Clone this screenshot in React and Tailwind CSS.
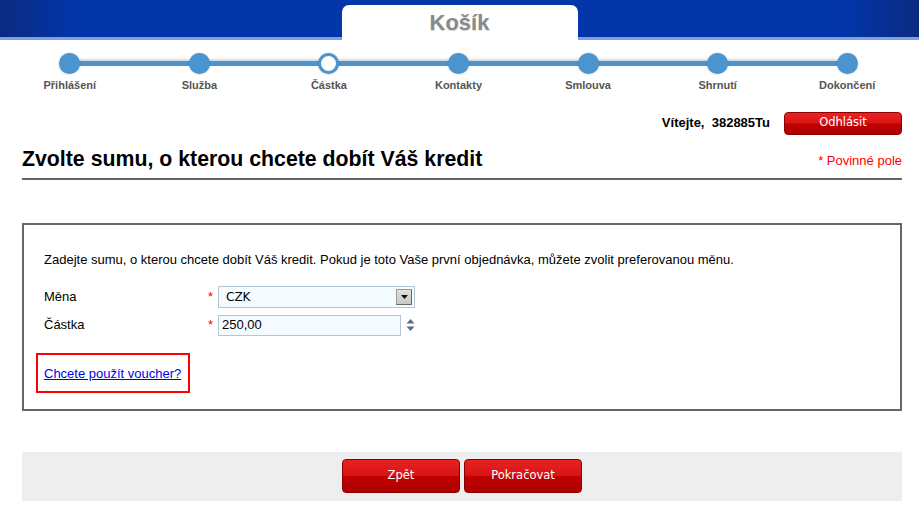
const steps = ['Přihlášení', 'Služba', 'Částka', 'Kontakty', 'Smlouva', 'Shrnutí', 'Dokončení'];

function RedButton({ children, className = '' }) {
  return (
    <button
      className={`rounded-[4px] border border-[#8e0000] bg-[linear-gradient(#e82222_0%,#d81414_48%,#bf0000_52%,#b00000_100%)] text-white text-[11.5px] font-['DejaVu_Sans',sans-serif] ${className}`}
    >
      {children}
    </button>
  );
}

export default function App() {
  return (
    <div className="w-[919px] h-[517px] bg-white overflow-hidden font-['Liberation_Sans',Arial,sans-serif] text-black">
      {/* top banner with tab */}
      <div className="h-[40px] flex items-end justify-center bg-[linear-gradient(90deg,#0a2a80_0%,#0336a8_8%,#0336a8_92%,#0a2a80_100%)] border-b-[3px] border-[#7f9fe0]">
        <div className="w-[236px] h-[35px] -mb-[3px] bg-white rounded-t-[7px] flex items-center justify-center">
          <span className="text-[22px] font-bold text-[#8a8a8a] [text-shadow:0_1px_1px_rgba(0,0,0,0.15)]">Košík</span>
        </div>
      </div>

      {/* stepper */}
      <div className="relative w-[907px] ml-[5px] mt-[13px]">
        <div className="absolute left-[65px] right-[65px] top-[8px] h-[5px] bg-[#4a95d0] shadow-[0_-2px_2px_rgba(0,0,0,0.15)]" />
        <div className="relative grid grid-cols-7">
          {steps.map((s, i) => (
            <div key={s} className="flex flex-col items-center">
              <div
                className={`w-[21px] h-[21px] rounded-full shadow-[0_0_2px_rgba(0,0,0,0.25)] ${
                  i === 2 ? 'bg-white border-[3px] border-[#4a95d0]' : 'bg-[#4a95d0]'
                }`}
              />
              <span className="mt-[3px] text-[11px] font-bold text-[#555]">{s}</span>
            </div>
          ))}
        </div>
      </div>

      {/* user row */}
      <div className="w-[880px] ml-[22px] mt-[18px] flex justify-end items-center gap-[14px]">
        <span className="text-[13px] font-bold">Vítejte,&nbsp; 382885Tu</span>
        <RedButton className="w-[118px] h-[23px]">Odhlásit</RedButton>
      </div>

      {/* heading */}
      <div className="w-[880px] ml-[22px] mt-[12px] flex justify-between items-center border-b-2 border-[#666] pb-[6px]">
        <h1 className="text-[21.3px] font-bold leading-[25px]">Zvolte sumu, o kterou chcete dobít Váš kredit</h1>
        <span className="text-[13px] text-[#ff0000] mt-[3px]">* Povinné pole</span>
      </div>

      {/* form box */}
      <div className="w-[880px] h-[188px] ml-[22px] mt-[43px] border-2 border-[#666] pt-[27px] px-[20px] text-[13px]">
        <p className="leading-[16px]">
          Zadejte sumu, o kterou chcete dobít Váš kredit. Pokud je toto Vaše první objednávka, můžete zvolit preferovanou měnu.
        </p>
        <div className="mt-[18px] flex items-center h-[22px]">
          <span className="w-[164px]">Měna</span>
          <span className="w-[10px] text-[#ff0000]">*</span>
          <div className="w-[197px] h-[22px] border border-[#b4c6d6] bg-[#f4fbff] flex items-center justify-between pl-[7px] pr-[2px]">
            <span className="text-[12px] font-['DejaVu_Sans',sans-serif]">CZK</span>
            <div className="w-[16px] h-[16px] bg-[linear-gradient(#e4e2de,#c9c6c0)] border border-[#999] border-r-[#666] border-b-[#666] flex items-center justify-center">
              <svg width="7" height="4" viewBox="0 0 7 4"><path d="M0 0h7L3.5 4z" fill="#111" /></svg>
            </div>
          </div>
        </div>
        <div className="mt-[7px] flex items-center h-[21px]">
          <span className="w-[164px]">Částka</span>
          <span className="w-[10px] text-[#ff0000]">*</span>
          <div className="w-[183px] h-[21px] border border-[#b4c6d6] bg-[#f4fbff] flex items-center pl-[3px]">
            <span className="text-[13px]">250,00</span>
          </div>
          <svg className="ml-[5px]" width="9" height="14" viewBox="0 0 9 14">
            <path d="M0.5 5.5L4.5 1L8.5 5.5z" fill="#5a6c7e" />
            <path d="M0.5 8.5L4.5 13L8.5 8.5z" fill="#5a6c7e" />
          </svg>
        </div>
        <div className="mt-[17px] -ml-[8px] w-[154px] h-[40px] border-2 border-[#ff0000] flex items-center pl-[6px]">
          <a href="#" className="text-[#0000ee] underline text-[13px] mt-[2px]">Chcete použít voucher?</a>
        </div>
      </div>

      {/* footer */}
      <div className="w-[880px] h-[49px] ml-[22px] mt-[41px] bg-[#eeeeee] flex justify-center items-center gap-[4px]">
        <RedButton className="w-[118px] h-[34px]">Zpět</RedButton>
        <RedButton className="w-[118px] h-[34px]">Pokračovat</RedButton>
      </div>
    </div>
  );
}
